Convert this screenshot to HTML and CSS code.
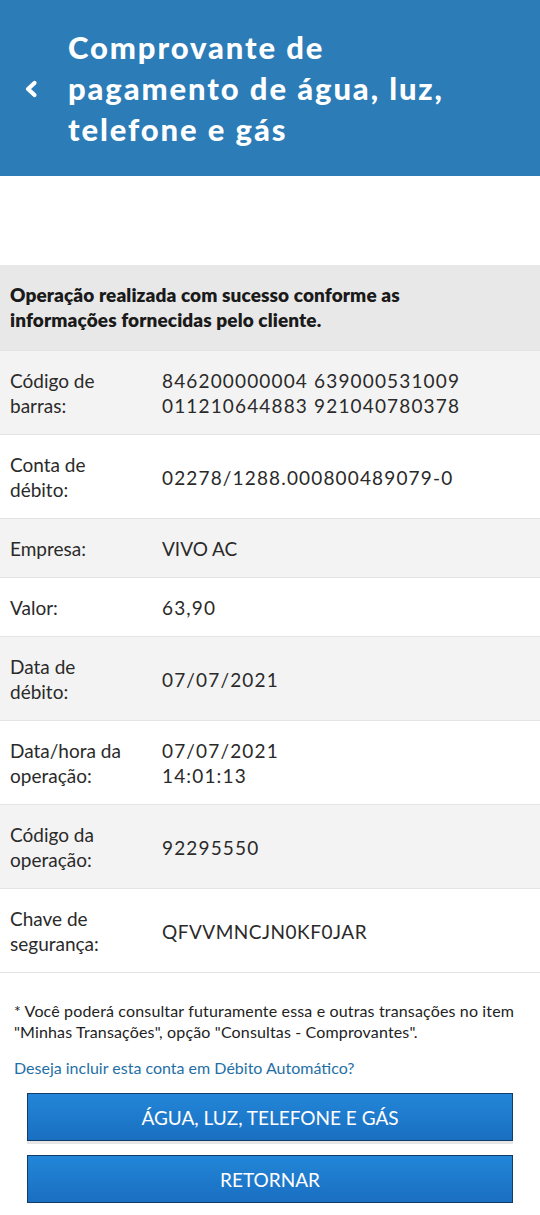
FILE: index.html
```html
<!DOCTYPE html>
<html lang="pt-BR">
<head>
<meta charset="utf-8">
<title>Comprovante</title>
<link rel="stylesheet" href="styles.css">
</head>
<body>
<header class="appbar">
  <button class="back" aria-label="Voltar">
    <svg width="16" height="20" viewBox="0 0 16 20"><path d="M11.5 4 L5 10 L11.5 16" fill="none" stroke="#fff" stroke-width="4.2" stroke-linecap="round" stroke-linejoin="round"/></svg>
  </button>
  <h1 class="title">Comprovante de pagamento de água, luz, telefone e gás</h1>
</header>
<div class="spacer"></div>
<div class="banner">Operação realizada com sucesso conforme as informações fornecidas pelo cliente.</div>
<div class="rows">
  <div class="row alt"><div class="label">Código de barras:</div><div class="value num">846200000004 639000531009 011210644883 921040780378</div></div>
  <div class="row"><div class="label">Conta de débito:</div><div class="value num">02278/1288.000800489079-0</div></div>
  <div class="row alt"><div class="label">Empresa:</div><div class="value">VIVO AC</div></div>
  <div class="row"><div class="label">Valor:</div><div class="value num">63,90</div></div>
  <div class="row alt"><div class="label">Data de débito:</div><div class="value num">07/07/2021</div></div>
  <div class="row"><div class="label">Data/hora da operação:</div><div class="value num">07/07/2021<br>14:01:13</div></div>
  <div class="row alt"><div class="label">Código da operação:</div><div class="value num">92295550</div></div>
  <div class="row"><div class="label">Chave de segurança:</div><div class="value key">QFVVMNCJN0KF0JAR</div></div>
</div>
<p class="note">* Você poderá consultar futuramente essa e outras transações no item "Minhas Transações", opção "Consultas - Comprovantes".</p>
<a class="link" href="#">Deseja incluir esta conta em Débito Automático?</a>
<div class="actions">
  <button class="btn">ÁGUA, LUZ, TELEFONE E GÁS</button>
  <button class="btn">RETORNAR</button>
</div>
</body>
</html>
```
FILE: styles.css
```css
* { box-sizing: border-box; }
body {
  margin: 0;
  background: #fff;
  font-family: "Lato", "Open Sans", sans-serif;
  color: #222;
}
.appbar {
  background: #2b7cb7;
  height: 176px;
  display: flex;
  align-items: center;
  padding-left: 23px;
}
.back {
  background: none;
  border: 0;
  padding: 0;
  width: 45px;
  display: flex;
  align-items: center;
  margin-top: 2px;
}
.title {
  margin: 0;
  color: #fff;
  font-size: 31px;
  line-height: 41px;
  font-weight: 900;
  width: 420px;
  letter-spacing: 1.9px;
}
.spacer { height: 89px; }
.banner {
  background: #e8e8e8;
  padding: 17px 60px 18px 10px;
  font-size: 19px;
  line-height: 25px;
  font-weight: 800;
  color: #1a1a1a;
  letter-spacing: 0.1px;
}
.row {
  display: flex;
  align-items: center;
  padding: 17px 10px 16px;
  border-bottom: 1px solid #e4e4e4;
  font-size: 19px;
  line-height: 25px;
  color: #2a2a2a;
}
.row:first-child { border-top: 1px solid #e4e4e4; }
.row.alt { background: #f4f3f3; }
.label { width: 152px; flex: none; padding-right: 30px; }
.value { flex: 1; }
.value.num { letter-spacing: 1.15px; }
.value.key { letter-spacing: 0.5px; }
.note {
  margin: 27px 14px 0 14px;
  font-size: 16px;
  line-height: 21px;
  color: #222;
  letter-spacing: 0.15px;
}
.link {
  display: block;
  margin: 15px 14px 0 14px;
  font-size: 16px;
  line-height: 21px;
  color: #1f6fa6;
  text-decoration: none;
}
.actions {
  display: flex;
  flex-direction: column;
  gap: 14px;
  padding: 15px 27px 0;
}
.btn {
  height: 48px;
  border: 1px solid #0f3d68;
  background: linear-gradient(#2286d8, #1a6fc1);
  color: #fff;
  font-family: inherit;
  font-size: 19px;
  box-shadow: 0 3px 0 #e6e6e6;
}
```
